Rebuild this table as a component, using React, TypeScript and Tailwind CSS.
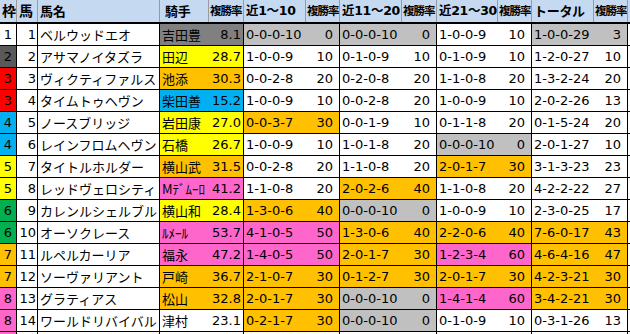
import React from "react";

const BG: Record<string, string> = {
  w: "bg-white",
  g: "bg-[#c0c0c0]",
  o: "bg-[#ffc000]",
  p: "bg-[#ff66cc]",
  y: "bg-[#ffff00]",
  b: "bg-[#00b0f0]",
  r: "bg-[#ff0000]",
  d: "bg-[#595959]",
  n: "bg-[#00b050]",
  m: "bg-[#808080]",
};

const WAKU: Record<number, string> = { 1: "w", 2: "d", 3: "r", 4: "b", 5: "y", 6: "n", 7: "o", 8: "p" };

type Rec = [string, string, string];
type Row = [number, number, string, string, string, string, Rec, Rec, Rec, Rec];

const rows: Row[] = [
  [1, 1, "ベルウッドエオ", "吉田豊", "m", "8.1", ["0-0-0-10", "0", "g"], ["0-0-0-10", "0", "g"], ["1-0-0-9", "10", "w"], ["1-0-0-29", "3", "g"]],
  [2, 2, "アサマノイタズラ", "田辺", "y", "28.7", ["1-0-0-9", "10", "w"], ["0-1-0-9", "10", "w"], ["0-1-0-9", "10", "w"], ["1-2-0-27", "10", "w"]],
  [3, 3, "ヴィクティファルス", "池添", "o", "30.3", ["0-0-2-8", "20", "w"], ["0-2-0-8", "20", "w"], ["1-1-0-8", "20", "w"], ["1-3-2-24", "20", "w"]],
  [3, 4, "タイムトゥヘヴン", "柴田善", "b", "15.2", ["1-0-0-9", "10", "w"], ["0-0-2-8", "20", "w"], ["1-0-0-9", "10", "w"], ["2-0-2-26", "13", "w"]],
  [4, 5, "ノースブリッジ", "岩田康", "y", "27.0", ["0-0-3-7", "30", "o"], ["0-0-1-9", "10", "w"], ["0-1-1-8", "20", "w"], ["0-1-5-24", "20", "w"]],
  [4, 6, "レインフロムヘヴン", "石橋", "y", "26.7", ["1-0-0-9", "10", "w"], ["1-0-1-8", "20", "w"], ["0-0-0-10", "0", "g"], ["2-0-1-27", "10", "w"]],
  [5, 7, "タイトルホルダー", "横山武", "o", "31.5", ["0-0-2-8", "20", "w"], ["1-1-0-8", "20", "w"], ["2-0-1-7", "30", "o"], ["3-1-3-23", "23", "w"]],
  [5, 8, "レッドヴェロシティ", "Mﾃﾞﾑｰﾛ", "p", "41.2", ["1-1-0-8", "20", "w"], ["2-0-2-6", "40", "o"], ["1-1-0-8", "20", "w"], ["4-2-2-22", "27", "w"]],
  [6, 9, "カレンルシェルブル", "横山和", "y", "28.4", ["1-3-0-6", "40", "o"], ["0-0-0-10", "0", "g"], ["1-0-0-9", "10", "w"], ["2-3-0-25", "17", "w"]],
  [6, 10, "オーソクレース", "ﾙﾒｰﾙ", "p", "53.7", ["4-1-0-5", "50", "p"], ["1-3-0-6", "40", "o"], ["2-2-0-6", "40", "o"], ["7-6-0-17", "43", "o"]],
  [7, 11, "ルペルカーリア", "福永", "p", "47.2", ["1-4-0-5", "50", "p"], ["2-0-1-7", "30", "o"], ["1-2-3-4", "60", "p"], ["4-6-4-16", "47", "o"]],
  [7, 12, "ソーヴァリアント", "戸崎", "o", "36.7", ["2-1-0-7", "30", "o"], ["0-1-2-7", "30", "o"], ["2-0-1-7", "30", "o"], ["4-2-3-21", "30", "o"]],
  [8, 13, "グラティアス", "松山", "o", "32.8", ["2-0-1-7", "30", "o"], ["0-0-0-10", "0", "g"], ["1-4-1-4", "60", "p"], ["3-4-2-21", "30", "o"]],
  [8, 14, "ワールドリバイバル", "津村", "w", "23.1", ["0-2-1-7", "30", "o"], ["0-0-0-10", "0", "g"], ["0-1-0-9", "10", "w"], ["0-3-1-26", "13", "w"]],
];

const recW = ["w-[62px]", "w-[62px]", "w-[61px]", "w-[62px]"];
const rateW = ["w-[34px]", "w-[35px]", "w-[34px]", "w-[34px]"];

const font = "font-['DejaVu_Sans','Noto_Sans_CJK_JP',sans-serif]";

function HeaderCell({ w, children, small }: { w: string; children: React.ReactNode; small?: boolean }) {
  return (
    <div
      className={`${w} shrink-0 h-full flex items-center border-r border-[#9a9a9a] overflow-hidden whitespace-nowrap font-bold ${small ? "pl-[1px] text-[11.5px] tracking-[-1px] font-['Noto_Sans_CJK_JP',sans-serif]" : "pl-[2px] text-[12.5px] tracking-[-0.3px] font-['DejaVu_Sans','Noto_Sans_CJK_JP',sans-serif]"}`}
    >
      {children}
    </div>
  );
}

export default function App() {
  return (
    <div className={`w-[630px] h-[334px] overflow-hidden bg-white text-black ${font} text-[13px] leading-none`}>
      <div className="flex h-[24px] bg-[#c5d9f1] border-b-2 border-black">
        <HeaderCell w="w-[17px]">
          <span className="text-[14px]">枠</span>
        </HeaderCell>
        <HeaderCell w="w-[21px]">
          <span className="text-[14px]">馬</span>
        </HeaderCell>
        <HeaderCell w="w-[122px]">
          <span className="text-[13px]">馬名</span>
        </HeaderCell>
        <HeaderCell w="w-[49px]">
          <span className="pl-[3px] text-[13px]">騎手</span>
        </HeaderCell>
        <HeaderCell w="w-[35px]" small>複勝率</HeaderCell>
        <HeaderCell w="w-[62px]">近1～10</HeaderCell>
        <HeaderCell w="w-[34px]" small>複勝率</HeaderCell>
        <HeaderCell w="w-[62px]">近11～20</HeaderCell>
        <HeaderCell w="w-[35px]" small>複勝率</HeaderCell>
        <HeaderCell w="w-[61px]">近21～30</HeaderCell>
        <HeaderCell w="w-[34px]" small>複勝率</HeaderCell>
        <HeaderCell w="w-[62px]">
          <span className="text-[13px]">トータル</span>
        </HeaderCell>
        <HeaderCell w="w-[34px]" small>複勝率</HeaderCell>
      </div>
      {rows.map((r) => {
        const [waku, num, name, jockey, jc, rate, ...recs] = r;
        return (
          <div key={num} className="flex h-[22px] border-b border-black">
            <div className={`w-[17px] shrink-0 flex items-center justify-center border-r border-black ${BG[WAKU[waku]]}`}>
              {waku}
            </div>
            <div className="w-[21px] shrink-0 flex items-center justify-end pr-[1px] border-r border-black bg-white">
              {num}
            </div>
            <div className="w-[122px] shrink-0 flex items-center pl-[2px] border-r border-black bg-white whitespace-nowrap overflow-hidden font-['Noto_Sans_CJK_JP',sans-serif]">
              {name}
            </div>
            <div className={`w-[49px] shrink-0 flex items-center pl-[2px] border-r border-transparent whitespace-nowrap overflow-hidden font-['Noto_Sans_CJK_JP',sans-serif] ${BG[jc]}`}>
              {jockey}
            </div>
            <div className={`w-[35px] shrink-0 flex items-center justify-end pr-[2px] border-r border-black ${BG[jc]}`}>
              {rate}
            </div>
            {recs.map((rec, i) => (
              <React.Fragment key={i}>
                <div className={`${recW[i]} shrink-0 flex items-center pl-[2px] border-r border-transparent whitespace-nowrap ${BG[rec[2]]}`}>
                  {rec[0]}
                </div>
                <div className={`${rateW[i]} shrink-0 flex items-center justify-end pr-[6px] border-r border-black ${BG[rec[2]]}`}>
                  {rec[1]}
                </div>
              </React.Fragment>
            ))}
          </div>
        );
      })}
      <div className="flex h-[22px]">
        <div className="w-[17px] shrink-0 border-r border-black bg-[#ff66cc]" />
        <div className="w-[21px] shrink-0 border-r border-black bg-white" />
        <div className="w-[122px] shrink-0 border-r border-black bg-white" />
        <div className="w-[84px] shrink-0 border-r border-black bg-white" />
        <div className="w-[96px] shrink-0 border-r border-black bg-white" />
        <div className="w-[97px] shrink-0 border-r border-black bg-white" />
        <div className="w-[95px] shrink-0 border-r border-black bg-white" />
        <div className="w-[96px] shrink-0 border-r border-black bg-white" />
      </div>
    </div>
  );
}
